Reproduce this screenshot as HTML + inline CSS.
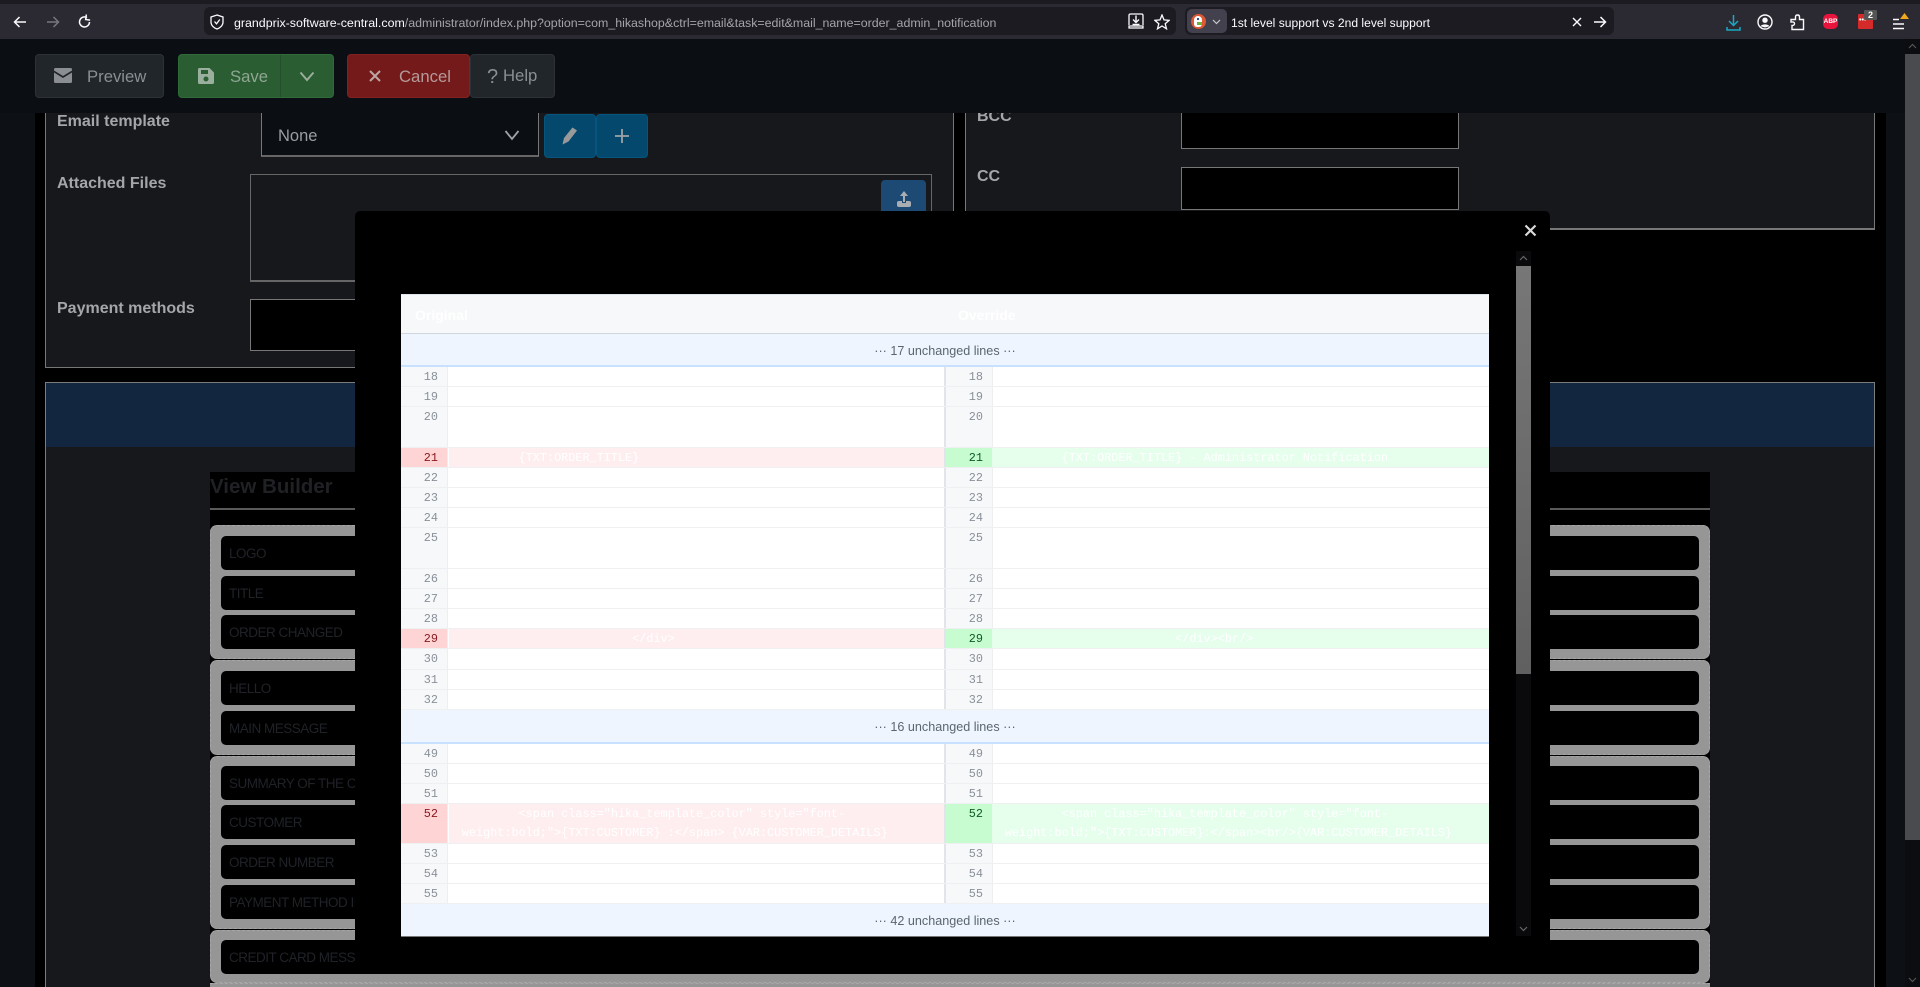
<!DOCTYPE html>
<html lang="en">
<head>
<meta charset="utf-8">
<title>Email override diff</title>
<style>
html,body{margin:0;padding:0;width:1920px;height:987px;overflow:hidden;background:#000;font-family:"Liberation Sans",sans-serif}
div,span,svg,i{position:absolute;box-sizing:border-box;font-style:normal}
.t{white-space:pre;line-height:1}
.lbl{font-size:16px;font-weight:700;color:#a4a6a9;white-space:pre;line-height:20px}
.box{background:#000;border:1px solid #777}
.btn{top:54px;height:44px;border-radius:4px;border:1px solid #2d3238;background:#21262b;color:#8b8f94;font-size:16.7px;line-height:44px;white-space:pre}
.grp{left:210px;width:1500px;background:#969696;border:1px dashed #a6a6a6;border-radius:7px}
.row{left:221px;width:1478px;height:34.4px;background:#000;border-radius:5px;color:#1f2227;font-size:13.5px;letter-spacing:-.5px;line-height:36px;padding-left:8px;white-space:pre}
.r{left:401px;width:1088px;background:#fff;border-bottom:1px solid #eef0f2}
.r i{top:0;bottom:0;padding-top:1px;font-family:"Liberation Mono",monospace;font-size:11.83px;line-height:19.2px;white-space:pre}
.n1,.n2{width:47px;background:#f6f8fa;color:#8a9098;text-align:right;border-right:1px solid #eceef0}
.n1{left:0;padding-right:9px}
.n2{left:545px;padding-right:9px}
.c1,.c2{color:#fff;padding-left:12.8px}
.c1{left:48px;width:495px}
.c2{left:591px;width:497px}
.s{left:543px;top:0;bottom:-1px;width:2px;background:#e1e4e8}
.del .n1{background:#ffd4d4;color:#86181d}
.del .c1{background:#ffeef0}
.del .n2{background:#c6fcd0;color:#0e5a22}
.del .c2{background:#e6ffed}
.h{left:401px;width:1088px;background:#eef5fe;color:#5b6570;font-size:12.6px;text-align:center;line-height:35px;border-bottom:2px solid #c8e1ff;white-space:pre}
</style>
</head>
<body>

<!-- page background -->
<div style="left:0;top:39px;width:1905px;height:948px;background:#000"></div>
<div style="left:0;top:39px;width:35px;height:948px;background:#0d1015"></div>
<div style="left:1886px;top:39px;width:19px;height:948px;background:#0d1015"></div>

<!-- left panel -->
<div style="left:45px;top:100px;width:909px;height:268px;background:#17181c;border:1px solid #777;border-top:0"></div>
<div class="lbl" style="left:57px;top:112px">Email template</div>
<div style="left:261px;top:100px;width:278px;height:57px;background:#0b0e13;border:1px solid #777;border-top:0;border-bottom:2px solid #666"></div>
<div class="t" style="left:278px;top:128px;font-size:16.5px;color:#9a9da1">None</div>
<svg style="left:504px;top:129px" width="16" height="12" viewBox="0 0 16 12"><path d="M1.5 2L8 10L14.5 2" fill="none" stroke="#a0a2a5" stroke-width="1.8"/></svg>
<div style="left:544px;top:114px;width:52px;height:44px;background:#04496d;border:1px solid #05567f;border-radius:4px"></div>
<svg style="left:561px;top:126px" width="18" height="20" viewBox="0 0 18 20"><path d="M1.5 18.5L3 12L11.5 1.5L16 4.5L7.5 15.5Z" fill="#9a9a9a"/></svg>
<div style="left:596px;top:114px;width:52px;height:44px;background:#04496d;border:1px solid #05567f;border-radius:4px"></div>
<svg style="left:614px;top:128px" width="16" height="16" viewBox="0 0 16 16"><path d="M8 1V15M1 8H15" stroke="#a0a2a5" stroke-width="1.8"/></svg>
<div class="lbl" style="left:57px;top:174px">Attached Files</div>
<div style="left:250px;top:174px;width:682px;height:108px;border:1px solid #666;border-bottom-width:2px"></div>
<div style="left:881px;top:180px;width:45px;height:50px;background:#1d4a74;border-radius:4px"></div>
<svg style="left:895px;top:190px" width="18" height="18" viewBox="0 0 18 18"><path d="M9 1L5 6H8V12H10V6H13Z" fill="#a8adb2"/><rect x="2" y="11" width="14" height="6" rx="2" fill="#a8adb2"/><rect x="7" y="10" width="4" height="3" fill="#1d4a74"/><rect x="8" y="6" width="2" height="6" fill="#a8adb2"/></svg>
<div class="lbl" style="left:57px;top:299px">Payment methods</div>
<div class="box" style="left:250px;top:299px;width:400px;height:52px"></div>

<!-- right panel -->
<div style="left:965px;top:100px;width:910px;height:130px;background:#17181c;border:1px solid #777;border-top:0;border-bottom-width:2px"></div>
<div class="lbl" style="left:977px;top:107px">BCC</div>
<div class="box" style="left:1181px;top:100px;width:278px;height:49px;border-top:0"></div>
<div class="lbl" style="left:977px;top:167px">CC</div>
<div class="box" style="left:1181px;top:167px;width:278px;height:43px"></div>

<!-- view panel -->
<div style="left:45px;top:382px;width:1830px;height:605px;background:#16181c;border:1px solid #7c7c7c;border-bottom:0"></div>
<div style="left:46px;top:383px;width:1828px;height:64px;background:#12263f"></div>

<!-- view builder -->
<div style="left:210px;top:472px;width:1500px;height:515px;background:#000"></div>
<div style="left:210px;top:508px;width:1500px;height:2px;background:#5a5a5a"></div>
<div class="t" style="left:210px;top:474px;font-size:20.5px;line-height:25px;font-weight:700;color:#1f2125">View Builder</div>

<div class="grp" style="top:525px;height:134px"></div>
<div class="row" style="top:536px">LOGO</div>
<div class="row" style="top:575.5px">TITLE</div>
<div class="row" style="top:615px">ORDER CHANGED</div>
<div class="grp" style="top:660px;height:95px"></div>
<div class="row" style="top:671px">HELLO</div>
<div class="row" style="top:710.5px">MAIN MESSAGE</div>
<div class="grp" style="top:756px;height:173px"></div>
<div class="row" style="top:765.5px">SUMMARY OF THE CART</div>
<div class="row" style="top:805px">CUSTOMER</div>
<div class="row" style="top:845px">ORDER NUMBER</div>
<div class="row" style="top:884.5px">PAYMENT METHOD INFO</div>
<div class="grp" style="top:930px;height:53px"></div>
<div class="row" style="top:940px">CREDIT CARD MESSAGE</div>
<div style="left:210px;top:983px;width:1500px;height:4px;background:#969696;border-top:1px dashed #a6a6a6"></div>

<!-- header bar -->
<div style="left:0;top:39px;width:1905px;height:74px;background:#0b0e13"></div>
<div class="btn" style="left:35px;width:129px;padding-left:51px">Preview</div>
<svg style="left:54px;top:68px" width="18" height="15" viewBox="0 0 18 15"><path d="M1.5 0H16.5Q18 0 18 1.5V2.5L9 8L0 2.5V1.5Q0 0 1.5 0ZM0 4.5L9 10L18 4.5V13.5Q18 15 16.5 15H1.5Q0 15 0 13.5Z" fill="#8b8f94"/></svg>
<div class="btn" style="left:178px;width:156px;padding-left:51px;background:#2a5d32;border-color:#2f6a38;color:#8fa693">Save</div>
<div style="left:280px;top:55px;width:1px;height:42px;background:#244f2b"></div>
<svg style="left:198px;top:68px" width="16" height="16" viewBox="0 0 16 16"><path fill-rule="evenodd" d="M1.5 0H11.5L16 4.5V14.5Q16 16 14.5 16H1.5Q0 16 0 14.5V1.5Q0 0 1.5 0ZM3 2V6H10V2ZM8 8.5A2.5 2.5 0 1 0 8 13.5A2.5 2.5 0 1 0 8 8.5Z" fill="#9aaf9e"/></svg>
<svg style="left:299px;top:71px" width="16" height="11" viewBox="0 0 16 11"><path d="M1.5 1.5L8 9L14.5 1.5" fill="none" stroke="#9aaf9e" stroke-width="1.9"/></svg>
<div class="btn" style="left:347px;width:123px;padding-left:51px;background:#751a1a;border-color:#812222;color:#b59a9a">Cancel</div>
<svg style="left:369px;top:70px" width="12" height="12" viewBox="0 0 12 12"><path d="M1 1L11 11M11 1L1 11" stroke="#bda5a5" stroke-width="2"/></svg>
<div class="btn" style="left:470px;width:85px"></div>
<div class="t" style="left:487px;top:66px;font-size:20px;line-height:22px;color:#8b8f94">?</div>
<div class="t" style="left:503px;top:66px;font-size:16.7px;line-height:20px;color:#8b8f94">Help</div>

<!-- main scrollbar -->
<div style="left:1905px;top:39px;width:15px;height:948px;background:#0c0d10"></div>
<div style="left:1905px;top:54px;width:15px;height:786px;background:#4a4b4f"></div>
<svg style="left:1908px;top:43px" width="9" height="6" viewBox="0 0 9 6"><path d="M1 5L4.5 1.5L8 5" fill="none" stroke="#555" stroke-width="1.2"/></svg>
<svg style="left:1908px;top:977px" width="9" height="6" viewBox="0 0 9 6"><path d="M1 1L4.5 4.5L8 1" fill="none" stroke="#555" stroke-width="1.2"/></svg>

<!-- browser chrome -->
<div style="left:0;top:0;width:1920px;height:39px;background:#2b2a33"></div>
<div style="left:0;top:0;width:1920px;height:4px;background:#1c1b22"></div>
<svg style="left:13px;top:15px" width="14" height="14" viewBox="0 0 14 14"><path d="M13 7H2M6.5 2L1.5 7L6.5 12" fill="none" stroke="#fbfbfe" stroke-width="1.5"/></svg>
<svg style="left:46px;top:15px" width="14" height="14" viewBox="0 0 14 14"><path d="M1 7H12M7.5 2L12.5 7L7.5 12" fill="none" stroke="#77767e" stroke-width="1.5"/></svg>
<svg style="left:77px;top:14px" width="16" height="16" viewBox="0 0 16 16"><path d="M12.5 8A5 5 0 1 1 10 3.6" fill="none" stroke="#fbfbfe" stroke-width="1.5"/><path d="M9 0.5V5.5H13.5" fill="none" stroke="#fbfbfe" stroke-width="1.5" transform="rotate(8 9 3)"/></svg>

<div style="left:204px;top:7px;width:972px;height:28px;background:#1c1b22;border-radius:6px"></div>
<svg style="left:210px;top:14px" width="14" height="16" viewBox="0 0 14 16"><path d="M7 1L13 3V8C13 11.5 10 14 7 15C4 14 1 11.5 1 8V3Z" fill="none" stroke="#fbfbfe" stroke-width="1.3"/><path d="M4.5 7.5L6.5 9.8L9.8 5.5" fill="none" stroke="#fbfbfe" stroke-width="1.3"/></svg>
<div class="t" style="left:234px;top:16px;font-size:12.4px;line-height:14px;color:#a4a4ab"><span style="position:static;color:#fbfbfe">grandprix-software-central.com</span>/administrator/index.php?option=com_hikashop&amp;ctrl=email&amp;task=edit&amp;mail_name=order_admin_notification</div>
<svg style="left:1128px;top:13px" width="16" height="17" viewBox="0 0 16 17"><path d="M1 12V2.5Q1 1 2.5 1H13.5Q15 1 15 2.5V12M1 13V15H15V13Z" fill="none" stroke="#fbfbfe" stroke-width="1.3"/><path d="M8 2.5V9M5 6.5L8 9.5L11 6.5M4.5 11.5H11.5" fill="none" stroke="#fbfbfe" stroke-width="1.4"/></svg>
<svg style="left:1154px;top:14px" width="16" height="16" viewBox="0 0 16 16"><path d="M8 1L10 5.9L15.2 6.3L11.2 9.7L12.5 14.8L8 12L3.5 14.8L4.8 9.7L0.8 6.3L6 5.9Z" fill="none" stroke="#fbfbfe" stroke-width="1.3"/></svg>

<div style="left:1185px;top:7px;width:429px;height:28px;background:#1c1b22;border-radius:6px"></div>
<div style="left:1187px;top:9px;width:40px;height:24px;background:#42414d;border-radius:5px"></div>
<div style="left:1191px;top:14px;width:15px;height:15px;border-radius:50%;background:#de5833"></div>
<div style="left:1194px;top:16px;width:8px;height:11px;border-radius:4px 4px 3px 3px;background:#fff"></div>
<div style="left:1197px;top:22px;width:5px;height:3px;background:#6cb33f"></div>
<div style="left:1197px;top:18px;width:2px;height:2px;background:#2d4f8e"></div>
<svg style="left:1212px;top:19px" width="9" height="6" viewBox="0 0 9 6"><path d="M1 1L4.5 4.5L8 1" fill="none" stroke="#c8c8cc" stroke-width="1.2"/></svg>
<div class="t" style="left:1231px;top:16px;font-size:12.1px;line-height:14px;color:#fbfbfe">1st level support vs 2nd level support</div>
<svg style="left:1572px;top:17px" width="10" height="10" viewBox="0 0 10 10"><path d="M1 1L9 9M9 1L1 9" stroke="#fbfbfe" stroke-width="1.4"/></svg>
<svg style="left:1593px;top:15px" width="14" height="14" viewBox="0 0 14 14"><path d="M1 7H12.5M7.5 2L12.5 7L7.5 12" fill="none" stroke="#fbfbfe" stroke-width="1.5"/></svg>

<svg style="left:1726px;top:14px" width="15" height="18" viewBox="0 0 15 18"><path d="M7.5 1V11M3 7L7.5 11.5L12 7M1 13V16H14V13" fill="none" stroke="#1aa9c4" stroke-width="1.5"/></svg>
<svg style="left:1757px;top:14px" width="16" height="16" viewBox="0 0 16 16"><circle cx="8" cy="8" r="7" fill="none" stroke="#fbfbfe" stroke-width="1.4"/><circle cx="8" cy="6.2" r="2.7" fill="#fbfbfe"/><path d="M3.5 12.2C5 9.8 11 9.8 12.5 12.2L8 13.5Z" fill="#fbfbfe"/></svg>
<svg style="left:1790px;top:14px" width="15" height="17" viewBox="0 0 15 17"><path d="M1 5.5H5.5V3Q5.5 1 7.5 1Q9.5 1 9.5 3V5.5H13.5V15.5H2V11.5Q4.5 11.5 4.5 9.5Q4.5 7.5 1 8Z" fill="none" stroke="#fbfbfe" stroke-width="1.4"/></svg>
<div style="left:1823px;top:14px;width:15px;height:15px;background:#e8143c;border-radius:5px"></div>
<div class="t" style="left:1823px;top:18px;width:15px;text-align:center;font-size:6.5px;line-height:7px;font-weight:700;color:#fff">ABP</div>
<div style="left:1858px;top:14px;width:15px;height:15px;background:#d42a2a;border-radius:1px"></div>
<div class="t" style="left:1859px;top:17px;font-size:7px;line-height:8px;font-weight:700;color:#fff">•••</div>
<div style="left:1864px;top:10px;width:13px;height:10px;background:#555;border-radius:1px"></div>
<div class="t" style="left:1864px;top:10px;width:13px;text-align:center;font-size:9px;line-height:10px;font-weight:700;color:#fff">2</div>
<svg style="left:1892px;top:12px" width="18" height="19" viewBox="0 0 18 19"><path d="M1 7.5H7M1 12H12M1 16.5H12" stroke="#fbfbfe" stroke-width="1.4"/><path d="M12.5 1L17 7H8Z" fill="#f0a81c"/></svg>

<!-- modal -->
<div style="left:355px;top:211px;width:1195px;height:762px;background:#000;border-radius:5px 5px 0 0"></div>
<svg style="left:1524px;top:224px" width="13" height="13" viewBox="0 0 13 13"><path d="M1.5 1.5L11.5 11.5M11.5 1.5L1.5 11.5" stroke="#dadada" stroke-width="2.2"/></svg>
<div style="left:1516px;top:251px;width:15px;height:685px;background:#0a0a0c"></div>
<div style="left:1516px;top:266px;width:15px;height:408px;background:linear-gradient(#777,#606060)"></div>
<svg style="left:1519px;top:255px" width="9" height="6" viewBox="0 0 9 6"><path d="M1 5L4.5 1.5L8 5" fill="none" stroke="#666" stroke-width="1.2"/></svg>
<svg style="left:1519px;top:926px" width="9" height="6" viewBox="0 0 9 6"><path d="M1 1L4.5 4.5L8 1" fill="none" stroke="#666" stroke-width="1.2"/></svg>

<!-- diff -->
<div style="left:401px;top:294px;width:1088px;height:40px;background:#f6f8fa;border-top:1px solid #dfe5ec;border-bottom:1px solid #d0d7de"></div>
<div class="t" style="left:415px;top:307px;font-size:14px;line-height:16px;font-weight:700;color:#fff">Original</div>
<div class="t" style="left:958px;top:307px;font-size:14px;line-height:16px;font-weight:700;color:#fff">Override</div>
<div class="h" style="top:334px;height:33px">··· 17 unchanged lines ···</div>

<div class="r" style="top:367px;height:20.2px"><i class="n1">18</i><i class="c1"></i><i class="s"></i><i class="n2">18</i><i class="c2"></i></div>
<div class="r" style="top:387.2px;height:20.2px"><i class="n1">19</i><i class="c1"></i><i class="s"></i><i class="n2">19</i><i class="c2"></i></div>
<div class="r" style="top:407.4px;height:40.2px"><i class="n1">20</i><i class="c1"></i><i class="s"></i><i class="n2">20</i><i class="c2"></i></div>
<div class="r del" style="top:447.6px;height:20.2px"><i class="n1">21</i><i class="c1">        {TXT:ORDER_TITLE}</i><i class="s"></i><i class="n2">21</i><i class="c2">        {TXT:ORDER_TITLE} - Administrator Notification</i></div>
<div class="r" style="top:467.8px;height:20.2px"><i class="n1">22</i><i class="c1"></i><i class="s"></i><i class="n2">22</i><i class="c2"></i></div>
<div class="r" style="top:488px;height:20.2px"><i class="n1">23</i><i class="c1"></i><i class="s"></i><i class="n2">23</i><i class="c2"></i></div>
<div class="r" style="top:508.2px;height:20.2px"><i class="n1">24</i><i class="c1"></i><i class="s"></i><i class="n2">24</i><i class="c2"></i></div>
<div class="r" style="top:528.4px;height:40.2px"><i class="n1">25</i><i class="c1"></i><i class="s"></i><i class="n2">25</i><i class="c2"></i></div>
<div class="r" style="top:568.6px;height:20.2px"><i class="n1">26</i><i class="c1"></i><i class="s"></i><i class="n2">26</i><i class="c2"></i></div>
<div class="r" style="top:588.8px;height:20.2px"><i class="n1">27</i><i class="c1"></i><i class="s"></i><i class="n2">27</i><i class="c2"></i></div>
<div class="r" style="top:609px;height:20.2px"><i class="n1">28</i><i class="c1"></i><i class="s"></i><i class="n2">28</i><i class="c2"></i></div>
<div class="r del" style="top:629.2px;height:20.2px"><i class="n1">29</i><i class="c1">                        &lt;/div&gt;</i><i class="s"></i><i class="n2">29</i><i class="c2">                        &lt;/div&gt;&lt;br/&gt;</i></div>
<div class="r" style="top:649.4px;height:20.2px"><i class="n1">30</i><i class="c1"></i><i class="s"></i><i class="n2">30</i><i class="c2"></i></div>
<div class="r" style="top:669.6px;height:20.2px"><i class="n1">31</i><i class="c1"></i><i class="s"></i><i class="n2">31</i><i class="c2"></i></div>
<div class="r" style="top:689.8px;height:20.2px"><i class="n1">32</i><i class="c1"></i><i class="s"></i><i class="n2">32</i><i class="c2"></i></div>
<div class="h" style="top:710px;height:33.5px">··· 16 unchanged lines ···</div>
<div class="r" style="top:743.5px;height:20px"><i class="n1">49</i><i class="c1"></i><i class="s"></i><i class="n2">49</i><i class="c2"></i></div>
<div class="r" style="top:763.5px;height:20px"><i class="n1">50</i><i class="c1"></i><i class="s"></i><i class="n2">50</i><i class="c2"></i></div>
<div class="r" style="top:783.5px;height:20px"><i class="n1">51</i><i class="c1"></i><i class="s"></i><i class="n2">51</i><i class="c2"></i></div>
<div class="r del" style="top:803.5px;height:40px"><i class="n1">52</i><i class="c1">        &lt;span class="hika_template_color" style="font-
weight:bold;"&gt;{TXT:CUSTOMER} :&lt;/span&gt; {VAR:CUSTOMER_DETAILS}</i><i class="s"></i><i class="n2">52</i><i class="c2">        &lt;span class="hika_template_color" style="font-
weight:bold;"&gt;{TXT:CUSTOMER}:&lt;/span&gt;&lt;br/&gt;{VAR:CUSTOMER_DETAILS}</i></div>
<div class="r" style="top:843.5px;height:20px"><i class="n1">53</i><i class="c1"></i><i class="s"></i><i class="n2">53</i><i class="c2"></i></div>
<div class="r" style="top:863.5px;height:20px"><i class="n1">54</i><i class="c1"></i><i class="s"></i><i class="n2">54</i><i class="c2"></i></div>
<div class="r" style="top:883.5px;height:20px"><i class="n1">55</i><i class="c1"></i><i class="s"></i><i class="n2">55</i><i class="c2"></i></div>
<div class="h" style="top:903.5px;height:33px;border-bottom:1px solid #777">··· 42 unchanged lines ···</div>

</body>
</html>
